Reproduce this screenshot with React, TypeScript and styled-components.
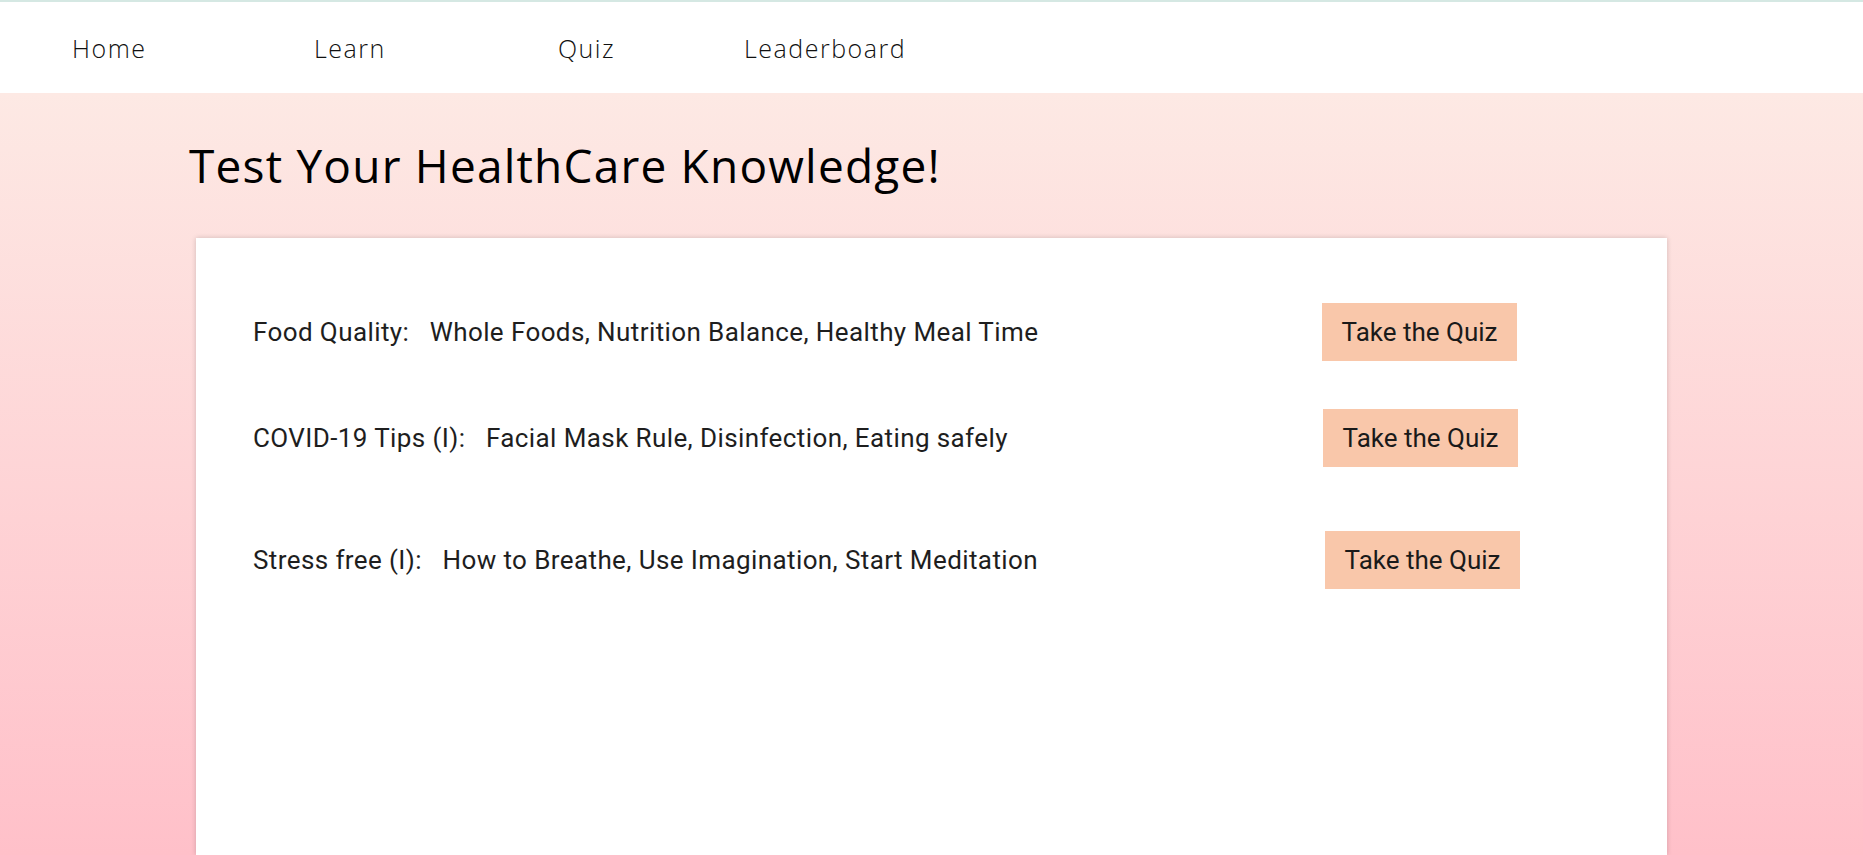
import styled, { createGlobalStyle } from 'styled-components'

const GlobalStyle = createGlobalStyle`
    body {
        margin: 0;
        font-family: "Open Sans", "Liberation Sans", sans-serif;
    }
`

const Page = styled.div`
    height: 100vh;
    overflow: hidden;
    display: flex;
    flex-direction: column;
`

const NavBar = styled.nav`
    height: 91px;
    border-top: 2px solid #d5e8e3;
    background: #ffffff;
    display: flex;
    align-items: center;
    padding-left: 72px;
    flex-shrink: 0;
`

const NavLink = styled.a<{ $width?: number }>`
    width: ${p => (p.$width ? `${p.$width}px` : 'auto')};
    font-family: "Open Sans", sans-serif;
    font-weight: 300;
    font-size: 25px;
    letter-spacing: 1.5px;
    color: #111;
    text-decoration: none;
    cursor: pointer;
`

const Main = styled.main`
    flex: 1;
    background: linear-gradient(180deg, #fde9e4 0%, #ffc0c9 100%);
    display: flex;
    flex-direction: column;
`

const Title = styled.h1`
    margin: 44px 0 0 189px;
    font-family: "Open Sans", sans-serif;
    font-weight: 400;
    font-size: 46px;
    line-height: 56px;
    color: #000;
    letter-spacing: 1.2px;
`

const Card = styled.section`
    margin: 45px 0 0 196px;
    width: 1471px;
    flex: 1;
    background: #ffffff;
    box-shadow: 0 0 5px rgba(0, 0, 0, 0.18);
    padding: 65px 0 0 57px;
    box-sizing: border-box;
    display: flex;
    flex-direction: column;
`

const QuizRow = styled.div<{ $gap: number; $nudge: number }>`
    display: flex;
    align-items: center;
    justify-content: space-between;
    margin-top: ${p => p.$gap}px;
    padding-right: ${p => 150 - p.$nudge}px;
`

const Topic = styled.span`
    font-family: Roboto, "Liberation Sans", sans-serif;
    font-size: 26px;
    letter-spacing: 0.4px;
    color: #1e1e1e;
    white-space: pre;
`

const QuizButton = styled.button`
    width: 195px;
    height: 58px;
    background: #f9c7aa;
    border: none;
    font-family: Roboto, "Liberation Sans", sans-serif;
    font-size: 26px;
    color: #1a1a1a;
    cursor: pointer;
`

const topics = [
    { label: 'Food Quality:   Whole Foods, Nutrition Balance, Healthy Meal Time', gap: 0, nudge: 0 },
    { label: 'COVID-19 Tips (I):   Facial Mask Rule, Disinfection, Eating safely', gap: 48, nudge: 1 },
    { label: 'Stress free (I):   How to Breathe, Use Imagination, Start Meditation', gap: 64, nudge: 3 },
]

const App = () => {
    return (
        <Page>
            <GlobalStyle />
            <NavBar>
                <NavLink $width={242}>Home</NavLink>
                <NavLink $width={244}>Learn</NavLink>
                <NavLink $width={186}>Quiz</NavLink>
                <NavLink>Leaderboard</NavLink>
            </NavBar>
            <Main>
                <Title>Test Your HealthCare Knowledge!</Title>
                <Card>
                    {topics.map(t => (
                        <QuizRow key={t.label} $gap={t.gap} $nudge={t.nudge}>
                            <Topic>{t.label}</Topic>
                            <QuizButton>Take the Quiz</QuizButton>
                        </QuizRow>
                    ))}
                </Card>
            </Main>
        </Page>
    )
}

export default App
